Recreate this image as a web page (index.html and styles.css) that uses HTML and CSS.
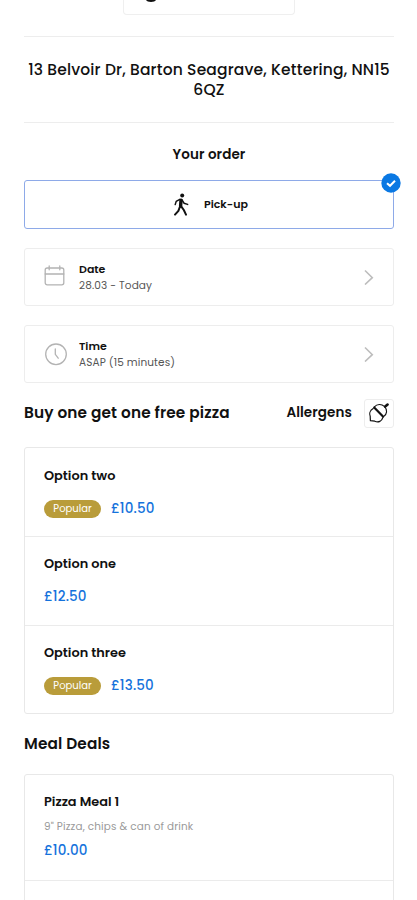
FILE: index.html
```html
<!DOCTYPE html>
<html lang="en">
<head>
  <meta charset="UTF-8">
  <meta name="viewport" content="width=device-width, initial-scale=1.0">
  <title>Your order</title>
  <link rel="stylesheet" href="styles.css">
</head>
<body>
  <div class="page">
    <div class="logo-box">
      <svg class="logo-mark" width="12" height="3" viewBox="0 0 12 3"><path d="M1 0H11C10 2.6 2 2.6 1 0Z" fill="#111"/></svg>
    </div>

    <div class="address">13 Belvoir Dr, Barton Seagrave, Kettering, NN15<br>6QZ</div>

    <h2 class="order-title">Your order</h2>

    <div class="pickup">
      <svg class="walk-icon" width="16" height="23" viewBox="0 0 16 23" fill="none" stroke="#111" stroke-linecap="round" stroke-linejoin="round">
        <circle cx="9.2" cy="2.4" r="2" fill="#111" stroke="none"/>
        <path d="M8 7.2L7.6 13" stroke-width="3.4"/>
        <path d="M6.8 6.3L3.2 8.4L2.2 11.6M9 6.8L11 10.2L14.6 11.4" stroke-width="1.5"/>
        <path d="M6.8 14L5.4 17.8L2 21.6M8.2 13.4L10.8 17L13 21.6" stroke-width="2"/>
      </svg>
      <span class="pickup-label">Pick-up</span>
      <svg class="check" width="20" height="20" viewBox="0 0 20 20">
        <circle cx="10" cy="10" r="9.7" fill="#0a78e3"/>
        <path d="M6 10.2L9 12.8L14 7.8" fill="none" stroke="#fff" stroke-width="2"/>
      </svg>
    </div>

    <div class="picker">
      <svg class="picker-icon" width="24" height="24" viewBox="0 0 24 24" fill="none" stroke="#b3b3b3" stroke-width="1.3" stroke-linecap="round">
        <rect x="1.2" y="3" width="18.6" height="16.8" rx="2"/>
        <path d="M1.2 9H19.8M5.2 1V4.8M15.8 1V4.8"/>
      </svg>
      <div class="picker-text">
        <div class="picker-name">Date</div>
        <div class="picker-value">28.03 - Today</div>
      </div>
      <svg class="arrow" width="10" height="16" viewBox="0 0 10 16" fill="none" stroke="#bdbdbd" stroke-width="1.6"><path d="M1 1.5L8.3 8.7L1 15.5"/></svg>
    </div>

    <div class="picker">
      <svg class="picker-icon" width="24" height="24" viewBox="0 0 24 24" fill="none" stroke="#b3b3b3" stroke-width="1.3" stroke-linecap="round">
        <circle cx="12" cy="12.3" r="10.3"/>
        <path d="M11.3 7V12.3L14.2 16.2"/>
      </svg>
      <div class="picker-text">
        <div class="picker-name">Time</div>
        <div class="picker-value">ASAP (15 minutes)</div>
      </div>
      <svg class="arrow" width="10" height="16" viewBox="0 0 10 16" fill="none" stroke="#bdbdbd" stroke-width="1.6"><path d="M1 1.5L8.3 8.7L1 15.5"/></svg>
    </div>

    <div class="section-head">
      <h2 class="section-title">Buy one get one free pizza</h2>
      <span class="allergens">Allergens</span>
      <div class="allergens-button">
        <svg width="22" height="22" viewBox="0 0 22 22" fill="none" stroke="#111" stroke-linecap="round" stroke-linejoin="round">
          <path d="M5.2 6.5C1.6 8.6 1.2 12 2.2 14.2L2.4 18.6L6.8 19.2C10.5 20.8 13.8 19.2 14.8 15.6" stroke-width="1.2"/>
          <path d="M6.4 4.8C9 1.8 13.6 1.8 16.6 4.6C19.6 7.8 19.2 12 15.6 14.6" stroke-width="1.1"/>
          <path d="M6.2 5.6L15 14.6" stroke-width="2.2"/>
          <path d="M17.2 4.6L19.6 2.6" stroke-width="2.6"/>
        </svg>
      </div>
    </div>

    <div class="menu">
      <div class="menu-item">
        <h3 class="item-name">Option two</h3>
        <div class="item-row"><span class="popular">Popular</span><span class="price">£10.50</span></div>
      </div>
      <div class="menu-item">
        <h3 class="item-name">Option one</h3>
        <div class="item-row"><span class="price">£12.50</span></div>
      </div>
      <div class="menu-item">
        <h3 class="item-name">Option three</h3>
        <div class="item-row"><span class="popular">Popular</span><span class="price">£13.50</span></div>
      </div>
    </div>

    <h2 class="section-title deals-title">Meal Deals</h2>

    <div class="menu">
      <div class="menu-item meal">
        <h3 class="item-name">Pizza Meal 1</h3>
        <p class="description">9" Pizza, chips &amp; can of drink</p>
        <div class="item-row"><span class="price">£10.00</span></div>
      </div>
      <div class="menu-item"></div>
    </div>
  </div>
</body>
</html>
```

FILE: styles.css
```css
* {
  box-sizing: border-box;
}

body {
  margin: 0;
  background-color: #fff;
  color: #111;
  font-family: "Poppins", "Inter", "Open Sans", sans-serif;
}

h2, h3, p {
  margin: 0;
}

.page {
  height: 900px;
  padding: 0 23px 0 24px;
  overflow: hidden;
}

/* Restaurant logo */
.logo-box {
  width: 172px;
  height: 15px;
  margin: 0 auto;
  padding-left: 21px;
  border: 1px solid #efefef;
  border-top: none;
  border-radius: 0 0 4px 4px;
}

.logo-mark {
  display: block;
}

/* Address between two lines */
.address {
  height: 87px;
  margin-top: 21px;
  padding-top: 23px;
  border-top: 1px solid #ededed;
  border-bottom: 1px solid #ededed;
  font-size: 15.5px;
  font-weight: 500;
  letter-spacing: 0.16px;
  line-height: 19.5px;
  text-align: center;
  white-space: nowrap;
}

.order-title {
  height: 57px;
  padding-top: 22px;
  font-size: 13.5px;
  font-weight: 600;
  letter-spacing: 0.1px;
  line-height: 20px;
  text-align: center;
}

/* Pick-up option */
.pickup {
  position: relative;
  display: flex;
  align-items: center;
  height: 49px;
  padding-left: 148px;
  border: 1px solid #8eaae8;
  border-radius: 3px;
}

.pickup-label {
  margin-left: 15px;
  font-size: 11px;
  font-weight: 600;
}

.check {
  position: absolute;
  top: -8px;
  right: -8px;
}

/* Date and time */
.picker {
  display: flex;
  align-items: center;
  height: 58px;
  margin-top: 19px;
  padding: 0 19px;
  border: 1px solid #ededed;
  border-radius: 3px;
}

.picker-text {
  flex: 1;
  padding-left: 11px;
}

.picker-name {
  font-size: 11px;
  font-weight: 600;
  line-height: 16px;
}

.picker-value {
  color: #555;
  font-size: 10.5px;
  letter-spacing: 0.12px;
  line-height: 17px;
}

/* Section headings */
.section-head {
  display: flex;
  align-items: center;
  height: 30px;
  margin: 15px 0 19px;
}

.section-title {
  flex: 1;
  font-size: 15.3px;
  font-weight: 600;
  letter-spacing: 0.15px;
  line-height: 20px;
}

.allergens {
  font-size: 13.5px;
  font-weight: 600;
  letter-spacing: 0.1px;
}

.allergens-button {
  display: flex;
  align-items: center;
  justify-content: center;
  width: 30px;
  height: 29px;
  margin-left: 12px;
  border: 1px solid #ededed;
  border-radius: 3px;
}

/* Menu list */
.menu {
  border: 1px solid #e8e8e8;
  border-radius: 3px;
}

.menu-item {
  height: 88px;
  padding: 18px 19px 0;
}

.menu-item + .menu-item {
  height: 88.5px;
  padding-top: 17px;
  border-top: 1px solid #ebebeb;
}

.item-name {
  font-size: 12.9px;
  font-weight: 600;
  line-height: 20px;
}

.item-row {
  display: flex;
  align-items: center;
  gap: 10px;
  height: 18px;
  margin-top: 14px;
}

.popular {
  width: 57px;
  height: 18px;
  border-radius: 9px;
  background-color: #b99c3a;
  color: #fff;
  font-size: 10px;
  line-height: 17px;
  text-align: center;
}

.price {
  color: #1472dc;
  font-size: 13.5px;
  font-weight: 500;
  letter-spacing: 0.15px;
}

.deals-title {
  height: 60px;
  padding-top: 20px;
}

.menu-item.meal {
  height: 105px;
  padding-top: 17px;
}

.description {
  margin-top: 6px;
  color: #999;
  font-size: 10.4px;
  letter-spacing: 0.16px;
  line-height: 18px;
}

.meal .item-row {
  margin-top: 6px;
}
```
